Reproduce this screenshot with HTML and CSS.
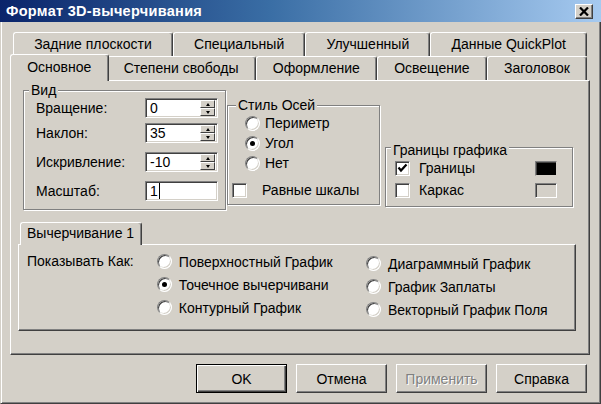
FILE: index.html
```html
<!DOCTYPE html>
<html lang="ru">
<head>
    <meta charset="UTF-8">
    <title>Формат 3D-вычерчивания</title>
    <link rel="stylesheet" href="styles.css">
</head>
<body>
    <div class="window">
        <div class="titlebar">
            <span class="title">Формат 3D-вычерчивания</span>
            <span class="close-btn">
                <svg width="10" height="9" viewBox="0 0 10 9"><path d="M1 0.5 L9 8.5 M9 0.5 L1 8.5" stroke="#000" stroke-width="2.2"/></svg>
            </span>
        </div>

        <div class="frame">
            <div class="tab-row tab-row-back">
                <div class="tab">Задние плоскости</div>
                <div class="tab">Специальный</div>
                <div class="tab">Улучшенный</div>
                <div class="tab">Данные QuickPlot</div>
            </div>
            <div class="tab-row tab-row-front">
                <div class="tab tab-active">Основное</div>
                <div class="tab">Степени свободы</div>
                <div class="tab">Оформление</div>
                <div class="tab">Освещение</div>
                <div class="tab">Заголовок</div>
            </div>

            <div class="panel">
                <div class="panel-top">
                    <div class="group group-view">
                        <div class="group-caption">Вид</div>
                        <div class="field-row">
                            <span class="field-label">Вращение:</span>
                            <div class="text-field">
                                <span class="field-value">0</span>
                                <span class="spinner"><span class="spin-btn spin-up"></span><span class="spin-btn spin-down"></span></span>
                            </div>
                        </div>
                        <div class="field-row">
                            <span class="field-label">Наклон:</span>
                            <div class="text-field">
                                <span class="field-value">35</span>
                                <span class="spinner"><span class="spin-btn spin-up"></span><span class="spin-btn spin-down"></span></span>
                            </div>
                        </div>
                        <div class="field-row">
                            <span class="field-label">Искривление:</span>
                            <div class="text-field">
                                <span class="field-value">-10</span>
                                <span class="spinner"><span class="spin-btn spin-up"></span><span class="spin-btn spin-down"></span></span>
                            </div>
                        </div>
                        <div class="field-row">
                            <span class="field-label">Масштаб:</span>
                            <div class="text-field">
                                <span class="field-value caret">1</span>
                            </div>
                        </div>
                    </div>

                    <div class="group group-axes">
                        <div class="group-caption">Стиль Осей</div>
                        <div class="option-row radio-row"><span class="radio"></span>Периметр</div>
                        <div class="option-row radio-row"><span class="radio checked"></span>Угол</div>
                        <div class="option-row radio-row"><span class="radio"></span>Нет</div>
                        <div class="option-row check-row wide"><span class="checkbox"></span>Равные шкалы</div>
                    </div>

                    <div class="group group-bounds">
                        <div class="group-caption">Границы графика</div>
                        <div class="option-row check-row">
                            <span class="checkbox"><svg width="13" height="13" viewBox="0 0 13 13"><path d="M2.5 5.5 L5 8.5 L10.5 2.5" fill="none" stroke="#000" stroke-width="2.2"/></svg></span>
                            Границы
                            <span class="swatch swatch-black"></span>
                        </div>
                        <div class="option-row check-row">
                            <span class="checkbox"></span>
                            Каркас
                            <span class="swatch"></span>
                        </div>
                    </div>
                </div>

                <div class="subtabs">
                    <div class="subtab">Вычерчивание 1</div>
                </div>
                <div class="subpanel">
                    <div class="show-label">Показывать Как:</div>
                    <div class="show-col">
                        <div class="option-row show-row"><span class="radio"></span>Поверхностный График</div>
                        <div class="option-row show-row"><span class="radio checked"></span>Точечное вычерчивани</div>
                        <div class="option-row show-row"><span class="radio"></span>Контурный График</div>
                    </div>
                    <div class="show-col show-col-right">
                        <div class="option-row show-row"><span class="radio"></span>Диаграммный График</div>
                        <div class="option-row show-row"><span class="radio"></span>График Заплаты</div>
                        <div class="option-row show-row"><span class="radio"></span>Векторный График Поля</div>
                    </div>
                </div>
            </div>

            <div class="buttons">
                <div class="btn btn-default">OK</div>
                <div class="btn">Отмена</div>
                <div class="btn btn-disabled">Применить</div>
                <div class="btn">Справка</div>
            </div>
        </div>
    </div>
</body>
</html>
```

FILE: styles.css
```css
:root {
    --face: #d4d0c8;
    --shadow: #808080;
    --dark: #404040;
    --light: #ffffff;
}

* {
    box-sizing: border-box;
}

body {
    margin: 0;
    background: var(--face);
    font-family: 'Liberation Sans', Arial, sans-serif;
    font-size: 14px;
    color: #000;
}

.window {
    width: 601px;
    height: 404px;
    display: flex;
    flex-direction: column;
}

/* title bar */
.titlebar {
    height: 22px;
    display: flex;
    align-items: center;
    justify-content: space-between;
    padding: 0 8px 0 6px;
    background: linear-gradient(to right, #0a246a, #3a6ea5 45%, #a6caf0);
}

.title {
    color: #fff;
    font-weight: bold;
    font-size: 14.5px;
    letter-spacing: 0.3px;
}

.close-btn {
    width: 18px;
    height: 15px;
    display: flex;
    align-items: center;
    justify-content: center;
    background: var(--face);
    border: 1px solid;
    border-color: var(--light) var(--dark) var(--dark) var(--light);
    box-shadow: inset -1px -1px 0 var(--shadow);
}

/* window body */
.frame {
    flex: 1;
    padding: 10px 10px 0 9px;
    border-left: 1px solid var(--face);
    border-right: 1px solid var(--dark);
    border-bottom: 1px solid var(--dark);
    box-shadow: inset 1px 0 0 var(--light), inset -1px -1px 0 var(--shadow);
}

/* tabs */
.tab-row {
    display: flex;
    height: 24px;
}

.tab-row-back {
    margin: 0 3px 0 3px;
}

.tab-row-front {
    margin: 0 3px 0 2px;
}

.tab {
    flex: 1 1 auto;
    height: 24px;
    padding: 0 4px;
    line-height: 22px;
    text-align: center;
    white-space: nowrap;
    background: var(--face);
    border-top: 1px solid var(--light);
    border-left: 1px solid var(--light);
    border-right: 1px solid var(--dark);
    border-radius: 3px 3px 0 0;
    box-shadow: inset -1px 0 0 var(--shadow);
}

.tab-active {
    position: relative;
    z-index: 1;
    height: 27px;
    margin: -2px -2px 0 -2px;
    padding-top: 1px;
}

.panel {
    height: 275px;
    border: 1px solid;
    border-color: var(--light) var(--dark) var(--dark) var(--light);
    box-shadow: inset -1px -1px 0 var(--shadow);
}

/* group boxes */
.panel-top {
    display: flex;
    align-items: flex-start;
    height: 129px;
    padding-left: 12px;
}

.group {
    border: 1px solid var(--shadow);
    box-shadow: inset 1px 1px 0 var(--light), 1px 1px 0 var(--light);
}

.group-caption {
    width: fit-content;
    height: 16px;
    line-height: 16px;
    margin: -9px 0 0 5px;
    padding: 0 2px;
    background: var(--face);
}

.group-view {
    width: 203px;
    height: 120px;
    margin-top: 9px;
}

.group-axes {
    width: 153px;
    height: 100px;
    margin: 24px 0 0 1px;
}

.group-axes .group-caption {
    margin-left: 8px;
}

.group-bounds {
    width: 188px;
    height: 60px;
    margin: 66px 0 0 5px;
    padding-top: 3px;
}

.field-row {
    display: flex;
    align-items: center;
    height: 20px;
    margin: 0 0 0 12px;
}

.field-row + .field-row {
    margin-top: 5px;
}

.field-row:nth-child(4),
.field-row:nth-child(5) {
    margin-top: 9px;
}

.field-label {
    width: 109px;
}

.text-field {
    width: 73px;
    height: 20px;
    display: flex;
    align-items: center;
    background: #fff;
    border: 1px solid;
    border-color: var(--shadow) var(--light) var(--light) var(--shadow);
    box-shadow: inset 1px 1px 0 var(--dark), inset -1px -1px 0 var(--face);
    padding: 0 2px 0 4px;
}

.field-value {
    flex: 1;
    line-height: 16px;
}

.caret {
    flex: none;
    padding-right: 1px;
    border-right: 1px solid #000;
}

.spinner {
    width: 15px;
    height: 16px;
    display: flex;
    flex-direction: column;
}

.spin-btn {
    flex: 1;
    display: flex;
    align-items: center;
    justify-content: center;
    background: var(--face);
    border: 1px solid;
    border-color: var(--light) var(--dark) var(--dark) var(--light);
}

.spin-up::after,
.spin-down::after {
    content: "";
    border-left: 2.5px solid transparent;
    border-right: 2.5px solid transparent;
}

.spin-up::after {
    border-bottom: 3px solid #000;
}

.spin-down::after {
    border-top: 3px solid #000;
}

/* radios and checkboxes */
.option-row {
    display: flex;
    align-items: center;
    height: 20px;
    white-space: nowrap;
}

.radio-row {
    margin-left: 17px;
    gap: 5px;
}

.check-row {
    margin-left: 9px;
    margin-bottom: 2px;
    gap: 9px;
    padding-right: 15px;
}

.check-row.wide {
    margin: 7px 0 0 4px;
    gap: 15px;
}

.radio {
    width: 15px;
    height: 15px;
    flex: none;
    display: flex;
    align-items: center;
    justify-content: center;
    border-radius: 50%;
    background: #fff;
    border: 1px solid;
    border-color: var(--shadow) var(--light) var(--light) var(--shadow);
    box-shadow: inset 1px 1px 0 var(--dark), inset -1px -1px 0 var(--face);
}

.radio.checked::after {
    content: "";
    width: 5px;
    height: 5px;
    border-radius: 50%;
    background: #000;
}

.checkbox {
    width: 15px;
    height: 15px;
    flex: none;
    display: flex;
    align-items: center;
    justify-content: center;
    background: #fff;
    border: 1px solid;
    border-color: var(--shadow) var(--light) var(--light) var(--shadow);
    box-shadow: inset 1px 1px 0 var(--dark), inset -1px -1px 0 var(--face);
}

.swatch {
    width: 22px;
    height: 15px;
    margin-left: auto;
    background: var(--face);
    border: 1px solid;
    border-color: var(--shadow) var(--light) var(--light) var(--shadow);
    box-shadow: inset 1px 1px 0 var(--dark);
}

.swatch-black {
    background: #000;
    border-color: var(--shadow) var(--face) var(--face) var(--shadow);
}

/* inner tab control */
.subtabs {
    display: flex;
    margin: 12px 0 0 9px;
}

.subtab {
    position: relative;
    z-index: 1;
    width: 122px;
    height: 23px;
    margin-bottom: -1px;
    padding-left: 6px;
    line-height: 21px;
    background: var(--face);
    border-top: 1px solid var(--light);
    border-left: 1px solid var(--light);
    border-right: 1px solid var(--dark);
    border-radius: 3px 3px 0 0;
    box-shadow: inset -1px 0 0 var(--shadow);
}

.subpanel {
    height: 87px;
    margin: 0 13px 0 7px;
    display: flex;
    align-items: flex-start;
    padding: 5px 0 0 8px;
    border: 1px solid;
    border-color: var(--light) var(--dark) var(--dark) var(--light);
    box-shadow: inset -1px -1px 0 var(--shadow);
}

.show-label {
    width: 131px;
    line-height: 22px;
}

.show-col {
    width: 211px;
}

.show-col-right {
    margin-top: 2px;
}

.show-row {
    height: 23px;
    gap: 7px;
}

/* dialog buttons */
.buttons {
    display: flex;
    justify-content: flex-end;
    gap: 9px;
    margin-top: 9px;
    padding-right: 3px;
}

.btn {
    width: 91px;
    height: 29px;
    display: flex;
    align-items: center;
    justify-content: center;
    background: var(--face);
    border: 1px solid;
    border-color: var(--light) var(--dark) var(--dark) var(--light);
    box-shadow: inset -1px -1px 0 var(--shadow);
}

.btn-default {
    border: 1px solid #000;
    box-shadow: inset 1px 1px 0 var(--light), inset -1px -1px 0 var(--dark), inset -2px -2px 0 var(--shadow);
}

.btn-disabled {
    color: var(--shadow);
    text-shadow: 1px 1px 0 var(--light);
}
```
